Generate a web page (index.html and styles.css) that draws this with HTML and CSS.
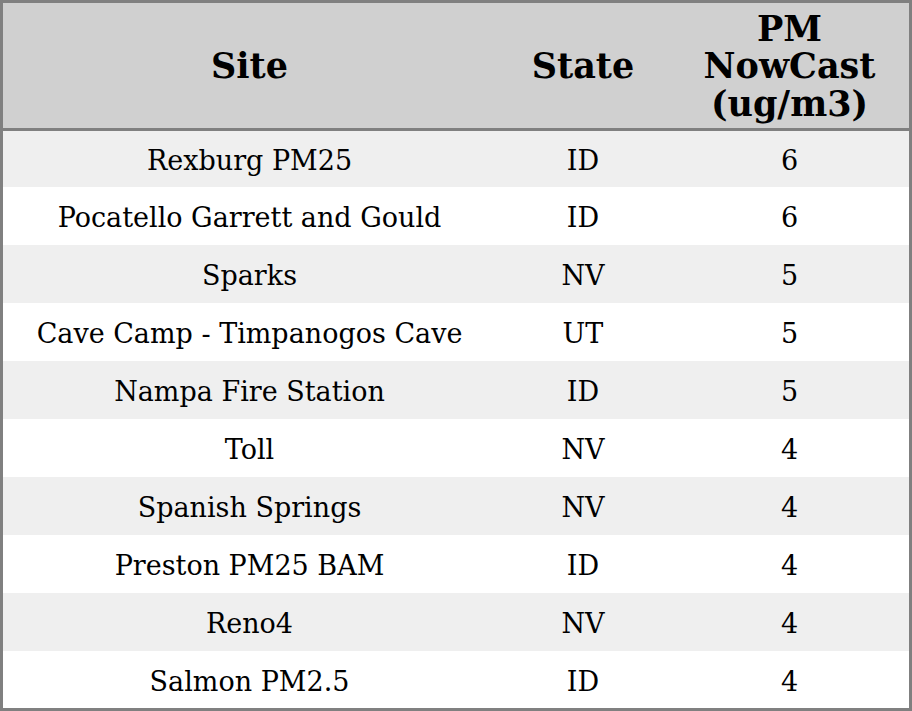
FILE: index.html
```html
<!DOCTYPE html>
<html>
<head>
<meta charset="utf-8">
<link rel="stylesheet" href="styles.css">
</head>
<body>
<table class="aq">
  <colgroup>
    <col class="c-site">
    <col class="c-state">
    <col class="c-pm">
  </colgroup>
  <thead>
    <tr><th>Site</th><th>State</th><th>PM<br>NowCast<br>(ug/m3)</th></tr>
  </thead>
  <tbody>
    <tr class="odd first"><td>Rexburg PM25</td><td>ID</td><td>6</td></tr>
    <tr><td>Pocatello Garrett and Gould</td><td>ID</td><td>6</td></tr>
    <tr class="odd"><td>Sparks</td><td>NV</td><td>5</td></tr>
    <tr><td>Cave Camp - Timpanogos Cave</td><td>UT</td><td>5</td></tr>
    <tr class="odd"><td>Nampa Fire Station</td><td>ID</td><td>5</td></tr>
    <tr><td>Toll</td><td>NV</td><td>4</td></tr>
    <tr class="odd"><td>Spanish Springs</td><td>NV</td><td>4</td></tr>
    <tr><td>Preston PM25 BAM</td><td>ID</td><td>4</td></tr>
    <tr class="odd"><td>Reno4</td><td>NV</td><td>4</td></tr>
    <tr class="last"><td>Salmon PM2.5</td><td>ID</td><td>4</td></tr>
  </tbody>
</table>
</body>
</html>
```
FILE: styles.css
```css
html, body {
  margin: 0;
  padding: 0;
  background: #ffffff;
}
.aq {
  width: 912px;
  height: 711px;
  box-sizing: border-box;
  border: 3px solid #808080;
  border-collapse: separate;
  border-spacing: 0;
  table-layout: fixed;
  font-family: "DejaVu Serif", serif;
  color: #000;
}
.c-site { width: 493px; }
.c-state { width: 174px; }
.c-pm { width: 239px; }
.aq th {
  background: #d0d0d0;
  height: 125px;
  padding: 1px 0 0 0;
  font-size: 35px;
  line-height: 37.5px;
  font-weight: bold;
  text-align: center;
  vertical-align: middle;
  border-bottom: 3px solid #808080;
  box-sizing: border-box;
}
.aq thead tr { height: 128px; }
.aq td {
  padding: 3px 0 0 0;
  font-size: 27px;
  line-height: 31px;
  text-align: center;
  vertical-align: middle;
  height: 55px;
}
.aq tbody tr { height: 58px; }
.aq tbody tr.first { height: 56px; }
.aq tbody tr.first td { height: 53px; }
.aq tbody tr.last { height: 57px; }
.aq tbody tr.last td { height: 54px; }
.aq tr.odd td { background: #efefef; }
```
